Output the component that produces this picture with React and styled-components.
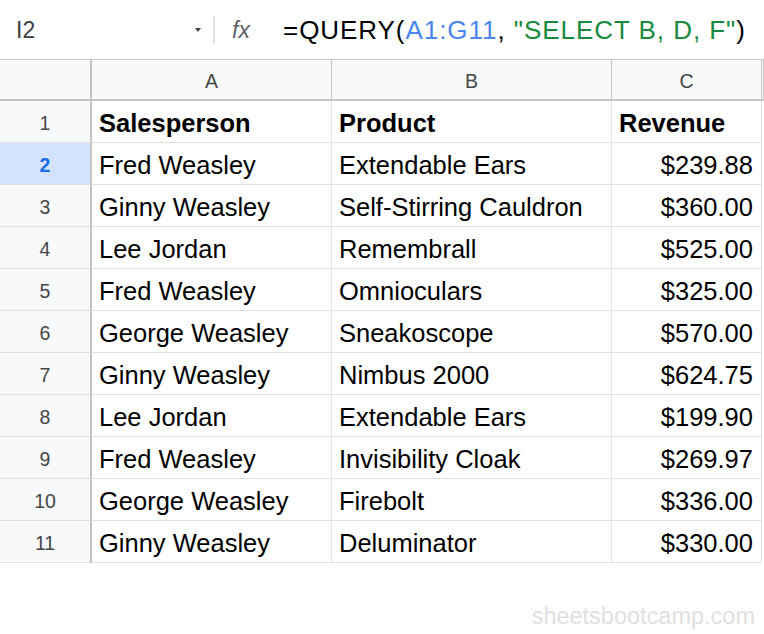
import React from "react";
import styled, { createGlobalStyle } from "styled-components";

const Global = createGlobalStyle`
  html, body { margin: 0; padding: 0; background: #ffffff; }
  body { font-family: "Liberation Sans", Arial, sans-serif; }
`;

const Page = styled.div`
  width: 764px;
  height: 634px;
  overflow: hidden;
  display: flex;
  flex-direction: column;
  background: #fff;
`;

const FormulaBar = styled.div`
  height: 59px;
  display: flex;
  align-items: center;
  flex-shrink: 0;
`;

const NameBox = styled.div`
  width: 195px;
  padding-left: 16px;
  box-sizing: border-box;
  font-size: 23px;
  color: #3c4043;
  padding-top: 1px;
`;

const Caret = styled.div`
  width: 0;
  height: 0;
  border-left: 3px solid transparent;
  border-right: 3px solid transparent;
  border-top: 4px solid #444746;
  margin-right: 12px;
`;

const Divider = styled.div`
  width: 2px;
  height: 28px;
  background: #e3e3e3;
  margin-right: 17px;
`;

const Fx = styled.div`
  font-size: 23px;
  font-style: italic;
  color: #5f6368;
  width: 51px;
  padding-top: 1px;
`;

const Formula = styled.div`
  font-size: 26px;
  letter-spacing: 0.95px;
  color: #000;
  white-space: nowrap;
  padding-top: 2px;
`;

const Tok = styled.span`
  color: ${(p) => (p.$kind === "ref" ? "#4a86ec" : p.$kind === "str" ? "#188a3e" : "#000")};
`;

const Grid = styled.div`
  display: grid;
  grid-template-columns: 92px 240px 280px 150px 1fr;
  grid-auto-rows: 42px;
`;

const ColHead = styled.div`
  background: #f8f9fa;
  border-top: 1px solid #c7c7c7;
  border-bottom: 2px solid #c4c4c4;
  border-right: ${(p) => (p.$corner ? "2px solid #c4c4c4" : "1px solid #c7c7c7")};
  box-sizing: border-box;
  display: flex;
  align-items: center;
  justify-content: center;
  font-size: 19.5px;
  color: #444746;
  padding-top: 4px;
`;

const RowHead = styled.div`
  background: ${(p) => (p.$active ? "#d3e3fd" : "#f8f9fa")};
  border-right: 2px solid #c4c4c4;
  border-bottom: 1px solid #e1e1e1;
  box-sizing: border-box;
  display: flex;
  align-items: center;
  justify-content: center;
  font-size: 19.5px;
  font-weight: ${(p) => (p.$active ? 700 : 400)};
  color: ${(p) => (p.$active ? "#1a6ee3" : "#444746")};
  padding-top: 4px;
`;

const Cell = styled.div`
  border-right: 1px solid #e1e1e1;
  border-bottom: 1px solid #e1e1e1;
  box-sizing: border-box;
  display: flex;
  align-items: center;
  justify-content: ${(p) => (p.$right ? "flex-end" : "flex-start")};
  padding: 4px 8px 0 7px;
  font-size: 25.5px;
  font-weight: ${(p) => (p.$bold ? 700 : 400)};
  color: #000;
  white-space: nowrap;
  overflow: hidden;
`;

const Spare = styled.div`
  box-sizing: border-box;
`;

const Footer = styled.div`
  flex: 1;
  display: flex;
  justify-content: flex-end;
  align-items: flex-end;
  padding: 0 9px 4px 0;
`;

const Watermark = styled.div`
  font-size: 23.5px;
  color: #e0e0e0;
`;

const rows = [
  ["Fred Weasley", "Extendable Ears", "$239.88"],
  ["Ginny Weasley", "Self-Stirring Cauldron", "$360.00"],
  ["Lee Jordan", "Remembrall", "$525.00"],
  ["Fred Weasley", "Omnioculars", "$325.00"],
  ["George Weasley", "Sneakoscope", "$570.00"],
  ["Ginny Weasley", "Nimbus 2000", "$624.75"],
  ["Lee Jordan", "Extendable Ears", "$199.90"],
  ["Fred Weasley", "Invisibility Cloak", "$269.97"],
  ["George Weasley", "Firebolt", "$336.00"],
  ["Ginny Weasley", "Deluminator", "$330.00"],
];

export default function App() {
  return (
    <Page>
      <Global />
      <FormulaBar>
        <NameBox>I2</NameBox>
        <Caret />
        <Divider />
        <Fx>fx</Fx>
        <Formula>
          <Tok>=QUERY(</Tok>
          <Tok $kind="ref">A1:G11</Tok>
          <Tok>, </Tok>
          <Tok $kind="str">"SELECT B, D, F"</Tok>
          <Tok>)</Tok>
        </Formula>
      </FormulaBar>
      <Grid>
        <ColHead $corner />
        <ColHead>A</ColHead>
        <ColHead>B</ColHead>
        <ColHead>C</ColHead>
        <ColHead />

        <RowHead>1</RowHead>
        <Cell $bold>Salesperson</Cell>
        <Cell $bold>Product</Cell>
        <Cell $bold>Revenue</Cell>
        <Spare />

        {rows.map((r, i) => (
          <React.Fragment key={i}>
            <RowHead $active={i === 0}>{i + 2}</RowHead>
            <Cell>{r[0]}</Cell>
            <Cell>{r[1]}</Cell>
            <Cell $right>{r[2]}</Cell>
            <Spare />
          </React.Fragment>
        ))}
      </Grid>
      <Footer>
        <Watermark>sheetsbootcamp.com</Watermark>
      </Footer>
    </Page>
  );
}
